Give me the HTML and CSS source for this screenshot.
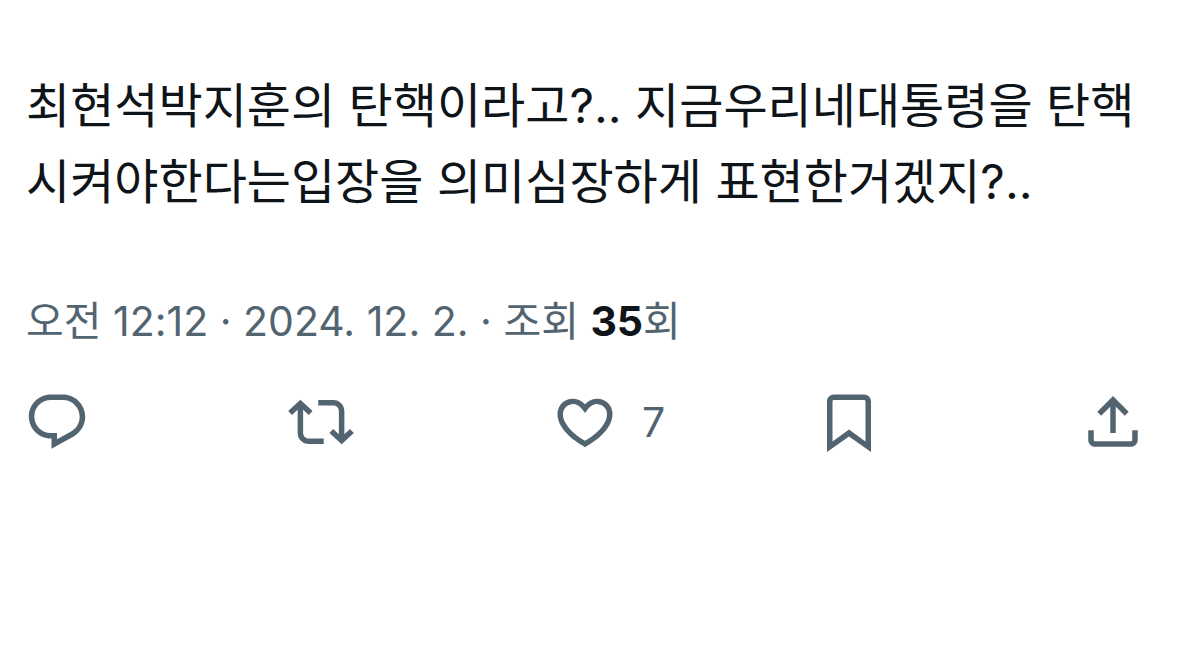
FILE: index.html
```html
<!DOCTYPE html>
<html lang="ko">

<head>
  <meta charset="utf-8">
  <meta name="viewport" content="width=device-width, initial-scale=1">
  <title>게시물</title>
  <link rel="stylesheet" href="styles.css">
</head>

<body>
  <article class="post">
    <p class="post-text">최현석박지훈의 탄핵이라고?.. 지금우리네대통령을 탄핵시켜야한다는입장을 의미심장하게 표현한거겠지?..</p>
    <div class="post-meta">
      <a href="#"><time datetime="2024-12-02T00:12">오전 12:12 · 2024. 12. 2.</time></a> · 조회 <strong>35</strong>회
    </div>
    <div class="actions">
      <button type="button" class="action" aria-label="답글">
        <svg viewBox="0 0 24 24"><path d="M1.751 10c0-4.42 3.584-8 8.005-8h4.366c4.49 0 8.129 3.64 8.129 8.13 0 2.96-1.607 5.68-4.196 7.11l-8.054 4.46v-3.69h-.067c-4.49.1-8.183-3.51-8.183-8.01zm8.005-6c-3.317 0-6.005 2.69-6.005 6 0 3.37 2.77 6.08 6.138 6.01l.351-.01h1.761v2.3l5.087-2.81c1.951-1.08 3.163-3.13 3.163-5.36 0-3.39-2.744-6.13-6.129-6.13H9.756z"/></svg>
      </button>
      <button type="button" class="action" aria-label="재게시">
        <svg viewBox="0 0 24 24"><path d="M4.5 3.88l4.432 4.14-1.364 1.46L5.5 7.55V16c0 1.1.896 2 2 2H13v2H7.5c-2.209 0-4-1.79-4-4V7.55L1.432 9.48.068 8.02 4.5 3.88zM16.5 6H11V4h5.5c2.209 0 4 1.79 4 4v8.45l2.068-1.93 1.364 1.46-4.432 4.14-4.432-4.14 1.364-1.46 2.068 1.93V8c0-1.1-.896-2-2-2z"/></svg>
      </button>
      <button type="button" class="action" aria-label="마음에 들어요 7">
        <svg viewBox="0 0 24 24"><path d="M16.697 5.5c-1.222-.06-2.679.51-3.89 2.16l-.805 1.09-.806-1.09C9.984 6.01 8.526 5.44 7.304 5.5c-1.243.07-2.349.78-2.91 1.91-.552 1.12-.633 2.78.479 4.82 1.074 1.97 3.257 4.27 7.129 6.61 3.87-2.34 6.052-4.64 7.126-6.61 1.111-2.04 1.03-3.7.477-4.82-.561-1.13-1.666-1.84-2.908-1.91zm4.187 7.69c-1.351 2.48-4.001 5.12-8.379 7.67l-.503.3-.504-.3c-4.379-2.55-7.029-5.19-8.382-7.67-1.36-2.5-1.41-4.86-.514-6.67.887-1.79 2.647-2.91 4.601-3.01 1.651-.09 3.368.56 4.798 2.01 1.429-1.45 3.146-2.1 4.796-2.01 1.954.1 3.714 1.22 4.601 3.01.896 1.81.846 4.17-.514 6.67z"/></svg>
        <span class="count">7</span>
      </button>
      <button type="button" class="action" aria-label="북마크">
        <svg viewBox="0 0 24 24"><path d="M4 4.5C4 3.12 5.119 2 6.5 2h11C18.881 2 20 3.12 20 4.5v18.44l-8-5.71-8 5.71V4.5zM6.5 4c-.276 0-.5.22-.5.5v14.56l6-4.29 6 4.29V4.5c0-.28-.224-.5-.5-.5h-11z"/></svg>
      </button>
      <button type="button" class="action" aria-label="공유하기">
        <svg viewBox="0 0 24 24"><path d="M12 2.59l5.7 5.7-1.41 1.42L13 6.41V16h-2V6.41l-3.3 3.3-1.41-1.42L12 2.59zM21 15l-.02 3.51c0 1.38-1.12 2.49-2.5 2.49H5.5C4.11 21 3 19.88 3 18.5V15h2v3.5c0 .28.22.5.5.5h12.98c.28 0 .5-.22.5-.5L19 15h2z"/></svg>
      </button>
    </div>
  </article>
</body>

</html>
```
FILE: styles.css
```css
body {
  margin: 0;
  background: #fff;
  color: #0f1419;
  font-family: Inter, "Noto Sans CJK KR", sans-serif;
}

.post {
  padding: 68px 26px 0;
}

.post-text {
  margin: 0;
  font-size: 48px;
  line-height: 76px;
  word-break: break-all;
}

.post-meta {
  margin-top: 75px;
  font-size: 41px;
  line-height: 52px;
  color: #536471;
}

.post-meta a {
  color: inherit;
  text-decoration: none;
}

.post-meta strong {
  font-weight: 700;
  color: #0f1419;
}

/* icons have their own inner space, so the row starts a bit before the text */
.actions {
  display: grid;
  grid-template-columns: repeat(4, 1fr) auto;
  margin: 42px 6px 0 -2px;
}

.action {
  display: flex;
  align-items: center;
  gap: 24px;
  padding: 0;
  border: none;
  background: none;
  color: #536471;
  font-family: inherit;
  font-size: 41px;
  cursor: pointer;
}

.action svg {
  width: 66px;
  height: 66px;
  fill: currentColor;
}
```
